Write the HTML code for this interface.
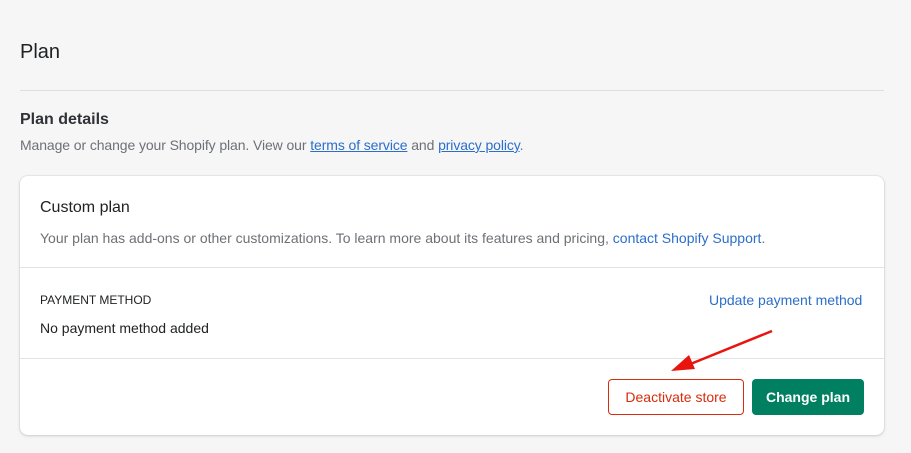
<!DOCTYPE html>
<html><head><style>
body{margin:0;width:911px;height:453px;background:#f6f6f7;font-family:"Liberation Sans",sans-serif;color:#202223;position:relative;overflow:hidden}
.a{position:absolute;white-space:nowrap}
a{color:#2c6ecb}
.u{text-decoration:underline}
</style></head><body>
<div class="a" style="left:20px;top:41px;font-size:20px;">Plan</div>
<div class="a" style="left:20px;top:90px;width:864px;height:1px;background:#dcdee0"></div>
<div class="a" style="left:20px;top:111px;font-size:16px;font-weight:bold;color:#303236">Plan details</div>
<div class="a" style="left:20px;top:137px;font-size:14px;color:#6d7175;letter-spacing:-0.1px">Manage or change your Shopify plan. View our <a class="u">terms of service</a> and <a class="u">privacy policy</a>.</div>
<div class="a" style="left:20px;top:176px;width:864px;height:259px;background:#fff;border-radius:8px;box-shadow:0 0 0 1px rgba(63,63,68,.06),0 1px 3px rgba(63,63,68,.18)"></div>
<div class="a" style="left:40px;top:199px;font-size:16px;">Custom plan</div>
<div class="a" style="left:40px;top:230px;font-size:14px;color:#6d7175">Your plan has add-ons or other customizations. To learn more about its features and pricing, <a>contact Shopify Support</a>.</div>
<div class="a" style="left:20px;top:267px;width:864px;height:1px;background:#e1e3e5"></div>
<div class="a" style="left:40px;top:293px;font-size:12px;">PAYMENT METHOD</div>
<div class="a" style="left:709px;top:292px;font-size:14px;"><a>Update payment method</a></div>
<div class="a" style="left:40px;top:320px;font-size:14px;">No payment method added</div>
<div class="a" style="left:20px;top:358px;width:864px;height:1px;background:#e1e3e5"></div>
<div class="a" style="left:608px;top:379px;width:134px;height:34px;border:1px solid #d82c0d;border-radius:4px;background:#fff;color:#d82c0d;font-size:14px;line-height:34px;text-align:center">Deactivate store</div>
<div class="a" style="left:752px;top:379px;width:112px;height:36px;border-radius:4px;background:#008060;color:#fff;font-size:14px;font-weight:bold;line-height:36px;text-align:center">Change plan</div>
<svg class="a" style="left:0;top:0" width="911" height="453"><line x1="772" y1="331" x2="688" y2="365" stroke="#e8140e" stroke-width="2.5"/><polygon points="671,371 689,355 695,369" fill="#e8140e"/></svg>
</body></html>
